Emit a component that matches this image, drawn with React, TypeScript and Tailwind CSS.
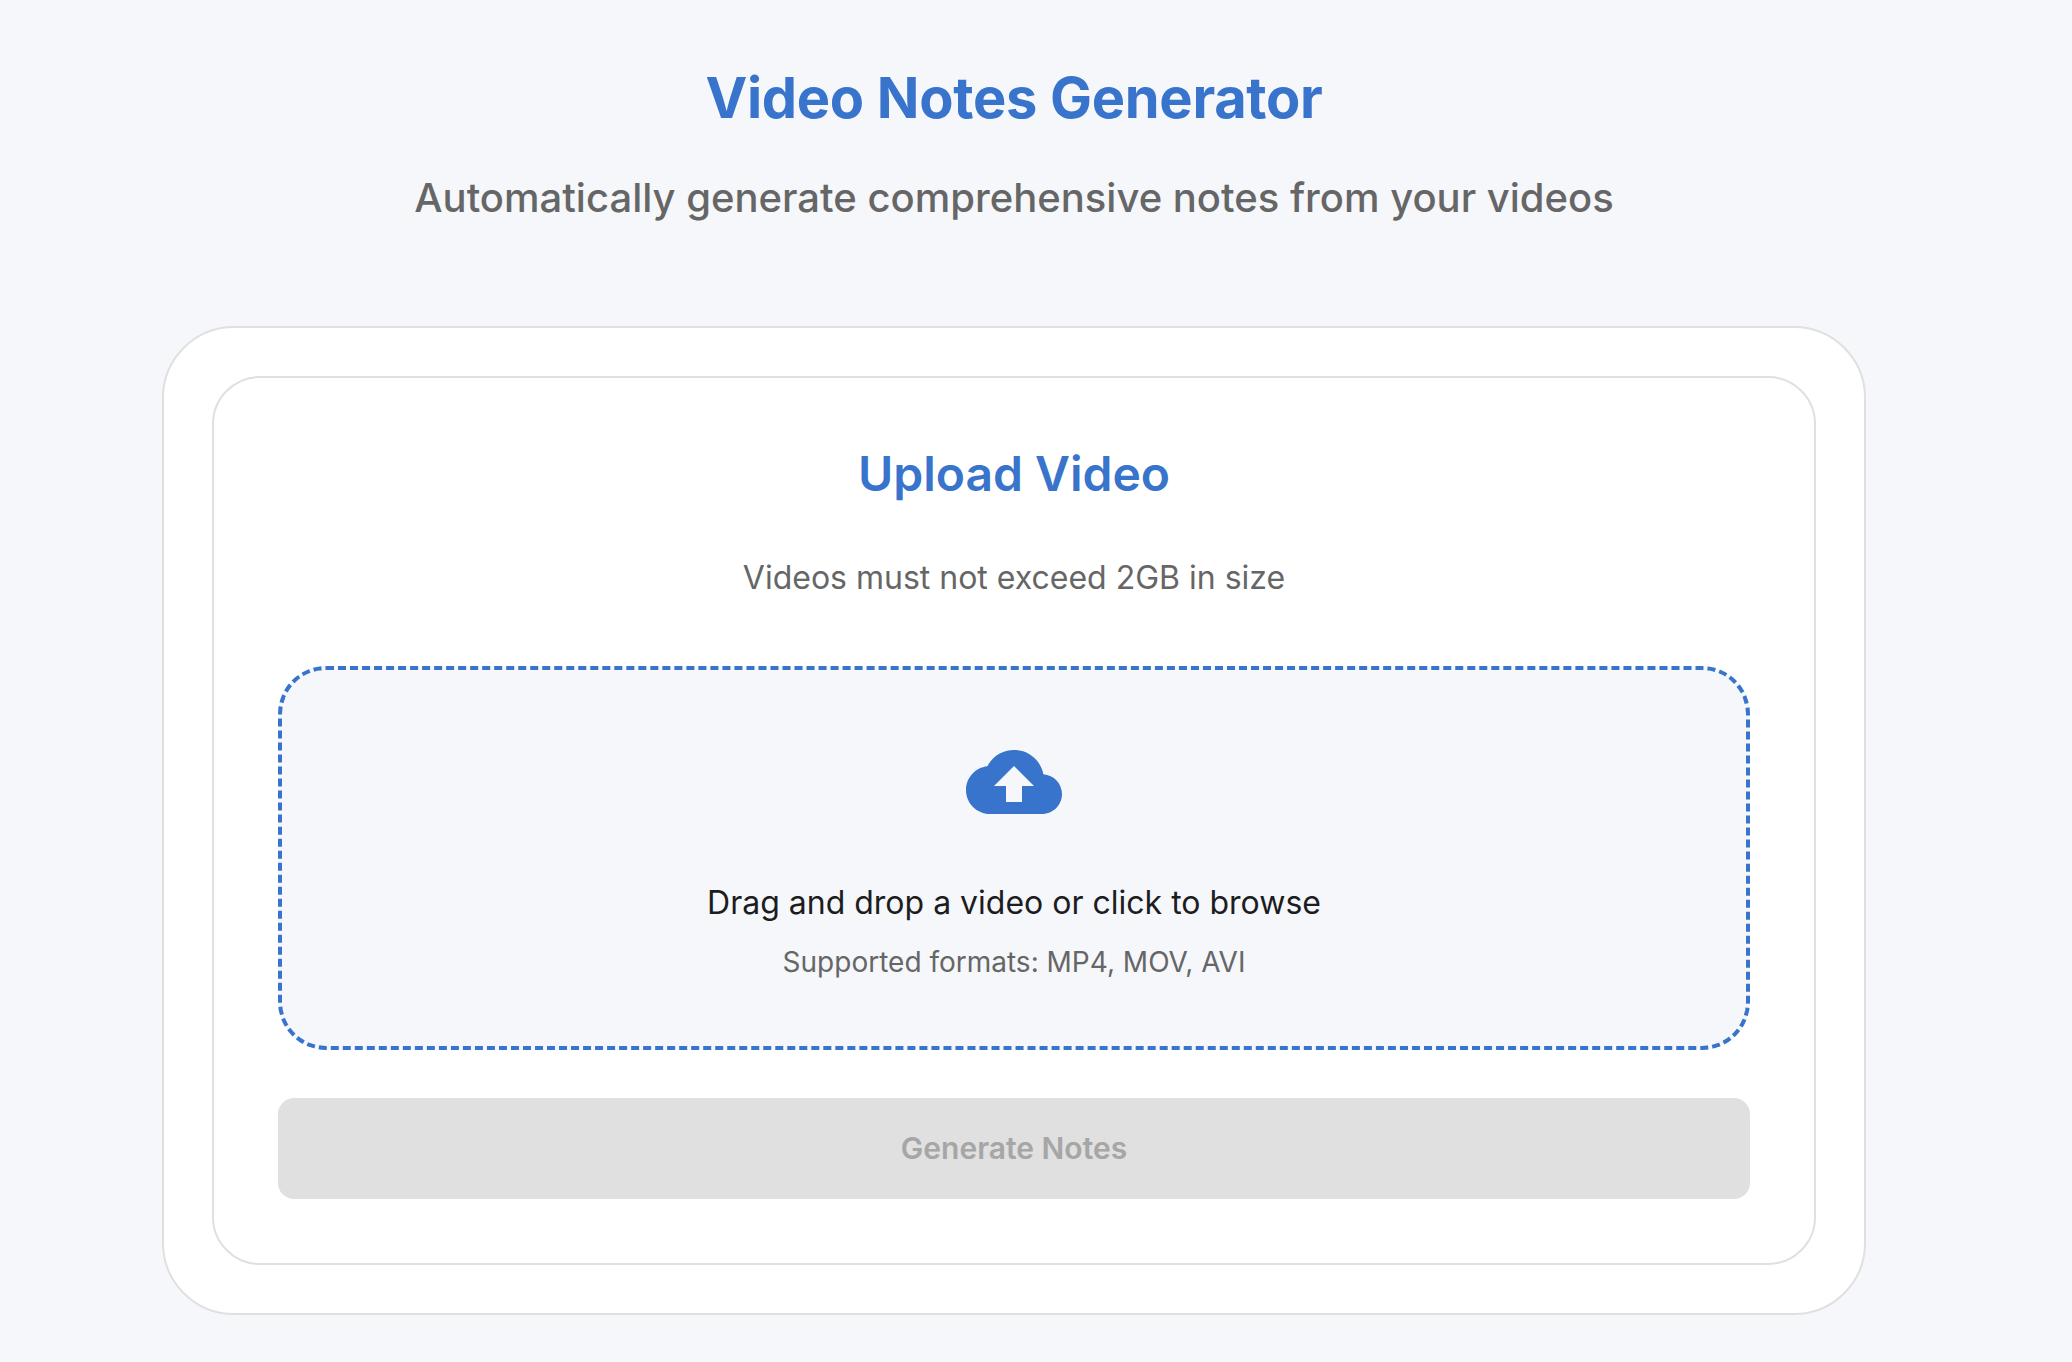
function CloudUploadIcon() {
  return (
    <svg viewBox="0 0 24 24" className="size-24 fill-[#3874cb]" aria-hidden="true">
      <path d="M19.35 10.04C18.67 6.59 15.64 4 12 4 9.11 4 6.6 5.64 5.35 8.04 2.34 8.36 0 10.91 0 14c0 3.31 2.69 6 6 6h13c2.76 0 5-2.24 5-5 0-2.64-2.05-4.78-4.65-4.96zM14 13v4h-4v-4H7l5-5 5 5h-3z" />
    </svg>
  );
}

function DropZone() {
  return (
    <div className="mt-16 flex h-96 w-full cursor-pointer flex-col items-center rounded-[48px] border-4 border-dashed border-[#3874cb] bg-[#f5f7fb] pt-16">
      <CloudUploadIcon />
      <p className="mt-[49px] text-[32px] leading-[48px] text-[#1d1d1f]">
        Drag and drop a video or click to browse
      </p>
      <p className="mt-[15px] text-[28px] leading-[40px] text-[#666666]">
        Supported formats: MP4, MOV, AVI
      </p>
    </div>
  );
}

export default function App() {
  return (
    <div className="h-[1362px] overflow-hidden bg-[#f5f7fb] pt-16 font-['Inter',sans-serif] antialiased">
      <main className="ml-[162px] flex w-[1704px] flex-col items-center">
        <h1 className="text-[56px] leading-[69px] font-bold tracking-[-0.3px] text-[#3874cb]">Video Notes Generator</h1>
        <h2 className="mt-[33px] text-[40px] leading-[64px] font-medium text-[#666666]">
          Automatically generate comprehensive notes from your videos
        </h2>
        <div className="mt-24 w-full rounded-[72px] border-2 border-[#e0e0e0] bg-white p-12">
          <section className="flex flex-col items-center rounded-[48px] border-2 border-[#e0e0e0] bg-white p-16">
            <h3 className="text-[48px] leading-[64px] font-semibold text-[#3874cb]">Upload Video</h3>
            <p className="mt-12 text-[32px] leading-[48px] text-[#666666]">
              Videos must not exceed 2GB in size
            </p>
            <DropZone />
            <button
              disabled
              className="mt-12 h-[101px] w-full rounded-2xl bg-[#e0e0e0] text-[30px] font-semibold text-[#a6a6a6]"
            >
              Generate Notes
            </button>
          </section>
        </div>
      </main>
    </div>
  );
}
